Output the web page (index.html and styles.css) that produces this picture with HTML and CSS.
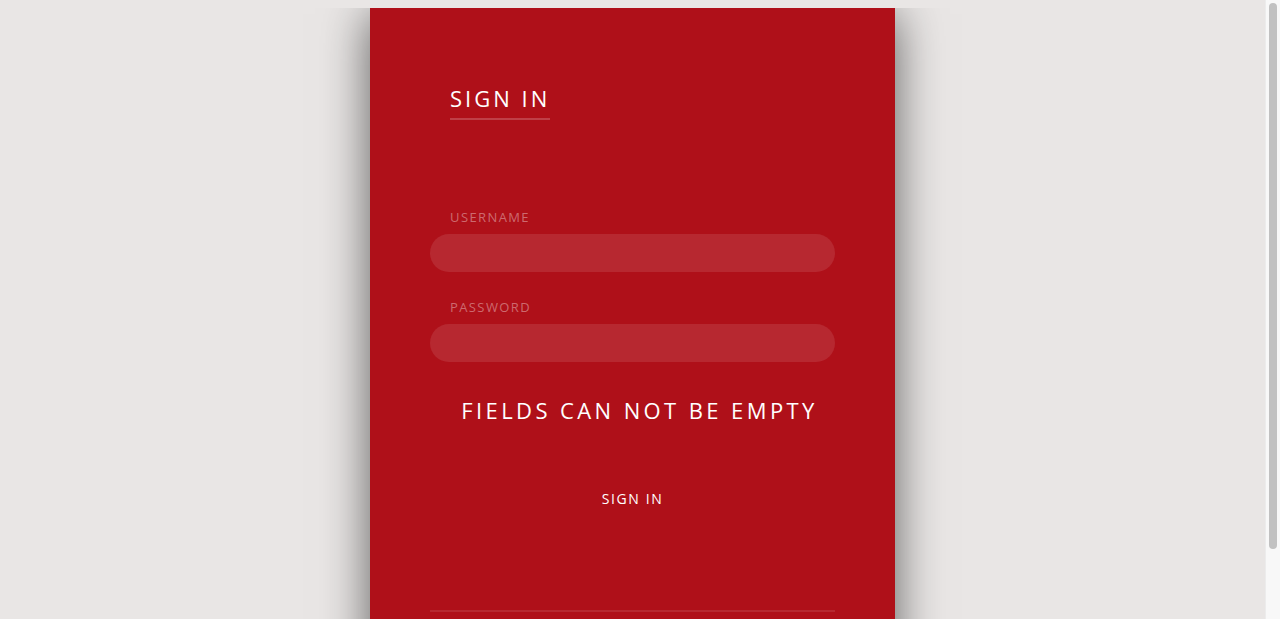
FILE: index.html
```html
<!DOCTYPE html>
<html>

<head>
    <title>Sign in</title>
    <link rel="stylesheet" href="styles.css">
</head>

<body>

    <div class="card">
        <h1 class="title">SIGN IN</h1>

        <form class="form">
            <label class="label" for="username">USERNAME</label>
            <input class="field" type="text" id="username">

            <label class="label" for="password">PASSWORD</label>
            <input class="field" type="password" id="password">

            <p class="error">FIELDS CAN NOT BE EMPTY</p>

            <button class="submit" type="button">SIGN IN</button>
        </form>

        <div class="divider"></div>
    </div>

    <!-- scrollbar of the window -->
    <div class="scrollbar"><div class="thumb"></div></div>

</body>

</html>
```

FILE: styles.css
```css
body { /* page background */
    margin: 8px 23px 8px 8px;
    background-color: #e9e6e5;
    font-family: "Open Sans", "DejaVu Sans", sans-serif;
}

.card { /* red login panel */
    box-sizing: border-box;
    width: 525px;
    height: 687px;
    margin: 0 auto;
    padding: 77px 60px 0;
    background-color: #af1019;
    box-shadow: 0 6px 45px rgba(0, 0, 0, 0.6);
}

.title { /* heading with underline */
    display: inline-block;
    margin: 0 0 0 20px;
    padding-bottom: 7px;
    font-size: 22px;
    font-weight: 400;
    line-height: 26px;
    letter-spacing: 3px;
    color: white;
    border-bottom: 2px solid rgba(255, 255, 255, 0.2);
}

.form {
    display: flex;
    flex-direction: column;
    margin-top: 89px;
}

.label {
    margin-left: 20px;
    font-size: 13px;
    line-height: 16px;
    letter-spacing: 1.4px;
    color: rgba(255, 255, 255, 0.38);
}

.field {
    box-sizing: border-box;
    height: 38px;
    margin: 9px 0 27px;
    padding: 0 20px;
    border: none;
    border-radius: 20px;
    background-color: rgba(255, 255, 255, 0.1);
    color: white;
    outline: none;
}

.error {
    margin: 8px 0 0 14px;
    text-align: center;
    font-size: 22px;
    line-height: 26px;
    letter-spacing: 3.4px;
    color: white;
}

.submit {
    align-self: center;
    margin-top: 67px;
    padding: 0;
    border: none;
    background: none;
    font-family: inherit;
    font-size: 14px;
    line-height: 18px;
    letter-spacing: 1.6px;
    color: white;
    cursor: pointer;
}

.divider {
    margin-top: 102px;
    border-top: 2px solid rgba(255, 255, 255, 0.1);
}

.scrollbar { /* window scrollbar track */
    position: fixed;
    top: 0;
    right: 0;
    width: 15px;
    height: 100%;
    background-color: #f8f8f8;
    border-left: 1px solid #ececec;
    box-sizing: border-box;
}

.thumb {
    margin: 3px 0 0 3px;
    width: 8px;
    height: 546px;
    border-radius: 4px;
    background-color: #c1c1c1;
}
```
